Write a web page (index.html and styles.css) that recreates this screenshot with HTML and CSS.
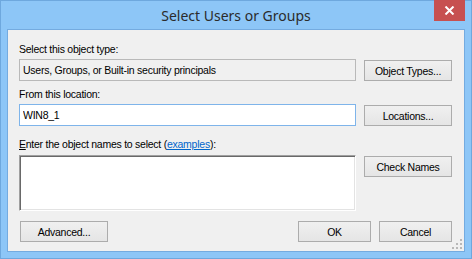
FILE: index.html
```html
<html>

<head>
    <meta charset="UTF-8">
    <link rel="stylesheet" href="styles.css">
</head>

<body>
    <div class="window">
        <div class="titlebar">Select Users or Groups</div>
        <button class="close">
            <svg width="11" height="9" viewBox="0 0 11 9">
                <path d="M1.5 0.5 L9.5 8.5 M9.5 0.5 L1.5 8.5" stroke="#fff" stroke-width="2" />
            </svg>
        </button>
        <div class="client">
            <div class="label first">Select this object type:</div>
            <div class="row">
                <input class="field readonly" readonly value="Users, Groups, or Built-in security principals">
                <button class="btn">Object Types...</button>
            </div>
            <div class="label second">From this location:</div>
            <div class="row">
                <input class="field active" readonly value="WIN8_1">
                <button class="btn">Locations...</button>
            </div>
            <div class="label third"><u>E</u>nter the object names to select (<a href="#">examples</a>):</div>
            <div class="row tall">
                <div class="names"></div>
                <button class="btn">Check Names</button>
            </div>
            <div class="footer">
                <button class="btn wide">Advanced...</button>
                <div class="spacer"></div>
                <button class="btn small">OK</button>
                <button class="btn small">Cancel</button>
            </div>
            <svg class="grip" width="11" height="11" viewBox="0 0 11 11">
                <rect x="8" y="0" width="2" height="2" fill="#b8b8b8" />
                <rect x="4" y="4" width="2" height="2" fill="#b8b8b8" />
                <rect x="8" y="4" width="2" height="2" fill="#b8b8b8" />
                <rect x="0" y="8" width="2" height="2" fill="#b8b8b8" />
                <rect x="4" y="8" width="2" height="2" fill="#b8b8b8" />
                <rect x="8" y="8" width="2" height="2" fill="#b8b8b8" />
            </svg>
        </div>
    </div>
</body>

</html>
```

FILE: styles.css
```css
* {
    margin: 0;
    padding: 0;
    box-sizing: border-box;
}

body {
    background-color: #8dc6f7;
}

.window {
    position: relative;
    width: 472px;
    height: 259px;
    background-color: #8dc6f7;
    border: 1px solid #6ea8de;
    padding: 0 6px 6px 6px;
}

.titlebar {
    height: 28px;
    line-height: 29px;
    text-align: center;
    font-family: "Noto Sans", sans-serif;
    font-size: 14px;
    color: #2b2b2b;
}

.close {
    position: absolute;
    top: -1px;
    right: 6px;
    width: 31px;
    height: 21px;
    border: none;
    background-color: #c75050;
    display: flex;
    align-items: center;
    justify-content: center;
}

.client {
    position: relative;
    height: 223px;
    background-color: #f0f0f0;
    border: 1px solid #74abe0;
    padding: 0 12px 0 11px;
    font-family: "Liberation Sans", sans-serif;
    font-size: 10.5px;
    letter-spacing: -0.25px;
    color: #000;
}

.label {
    line-height: 13px;
}

.label.first {
    padding-top: 13px;
}

.label.second {
    margin-top: 7px;
}

.label.third {
    margin-top: 12px;
}

.label a {
    color: #0066cc;
}

.row {
    display: grid;
    grid-template-columns: 1fr 88px;
    column-gap: 8px;
    align-items: start;
    margin-top: 3px;
}

.row.tall {
    margin-top: 4px;
}

.btn {
    height: 21px;
    border: 1px solid #acacac;
    background: linear-gradient(#f0f0f0, #e5e5e5);
    font-family: "Liberation Sans", sans-serif;
    font-size: 10.5px;
    letter-spacing: -0.25px;
    color: #000;
}

.row .btn {
    margin-top: 1px;
}

.field {
    height: 22px;
    border: 1px solid #b9b9b9;
    padding: 0 3px;
    line-height: 17px;
    font-family: "Liberation Sans", sans-serif;
    font-size: 10.5px;
    letter-spacing: -0.25px;
    color: #000;
    outline: none;
    width: 100%;
}

.field.readonly {
    background-color: #f0f0f0;
}

.field.active {
    border-color: #7eb4ea;
    background-color: #fff;
}

.names {
    height: 56px;
    background-color: #fff;
    border-style: solid;
    border-width: 1px;
    border-color: #a0a0a0 #fff #fff #a0a0a0;
    box-shadow: inset 1px 1px 0 #696969, inset -1px -1px 0 #e3e3e3;
}

.footer {
    display: flex;
    gap: 8px;
    margin-top: 10px;
}

.wide {
    width: 88px;
    margin-left: 1px;
}

.small {
    width: 73px;
}

.spacer {
    flex: 1;
}

.grip {
    position: absolute;
    right: 1px;
    bottom: 1px;
}
```
